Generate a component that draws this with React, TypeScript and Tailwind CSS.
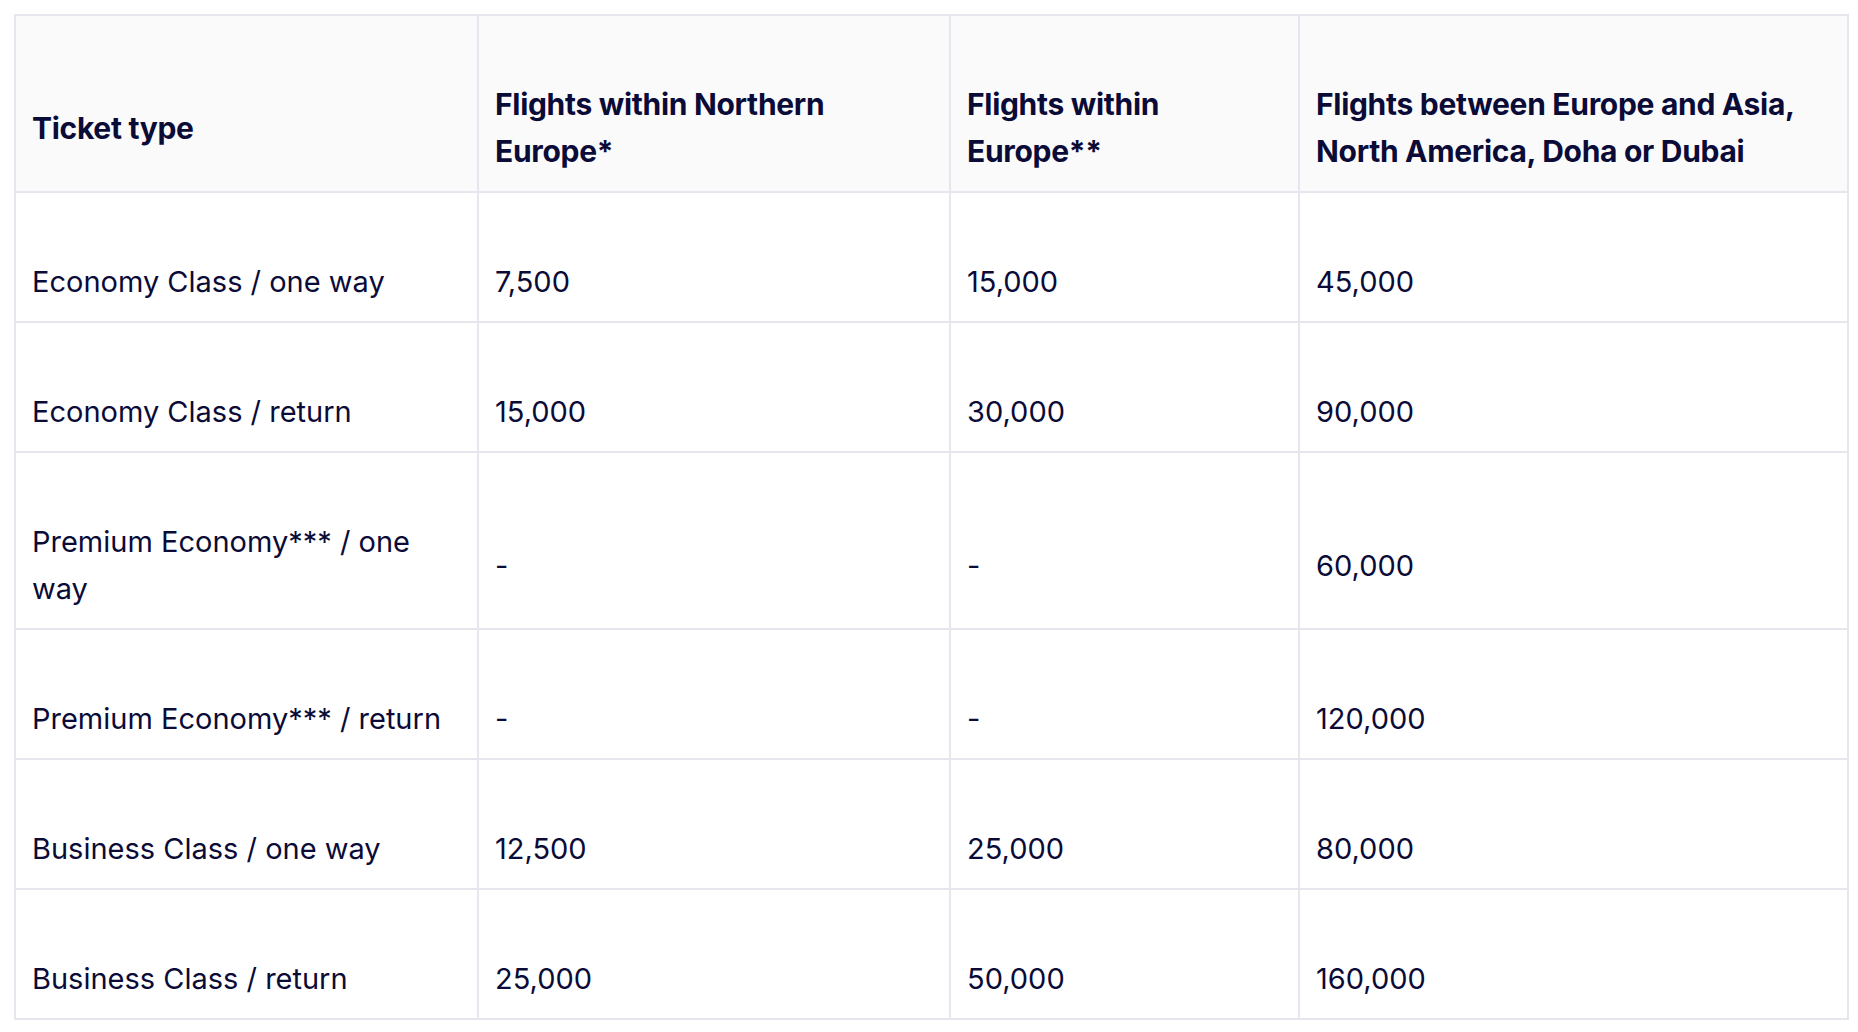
const HEADERS = [
  'Ticket type',
  'Flights within Northern Europe*',
  'Flights within Europe**',
  'Flights between Europe and Asia, North America, Doha or Dubai',
];

const ROWS: string[][] = [
  ['Economy Class / one way', '7,500', '15,000', '45,000'],
  ['Economy Class / return', '15,000', '30,000', '90,000'],
  ['Premium Economy*** / one way', '-', '-', '60,000'],
  ['Premium Economy*** / return', '-', '-', '120,000'],
  ['Business Class / one way', '12,500', '25,000', '80,000'],
  ['Business Class / return', '25,000', '50,000', '160,000'],
];

const cell = 'border-2 border-[#e6e6ef] pl-[16px] pr-[16px] pt-[65px] pb-[16px] text-left align-middle';

export default function App() {
  return (
    <div className="min-h-screen bg-white pl-[14px] pt-[14px] font-['Inter',sans-serif] text-[#0b0b38]">
      <table className="w-[1833px] table-fixed border-collapse leading-[47px]">
        <colgroup>
          <col className="w-[463px]" />
          <col className="w-[472px]" />
          <col className="w-[349px]" />
          <col className="w-[549px]" />
        </colgroup>
        <thead>
          <tr className="bg-[#fafafb]">
            {HEADERS.map((h) => (
              <th key={h} className={`${cell} text-[30px] font-bold tracking-[-0.01em]`}>
                {h}
              </th>
            ))}
          </tr>
        </thead>
        <tbody>
          {ROWS.map((row) => (
            <tr key={row[0]}>
              {row.map((v, i) => (
                <td key={i} className={`${cell} text-[29px] font-normal`}>
                  {v}
                </td>
              ))}
            </tr>
          ))}
        </tbody>
      </table>
    </div>
  );
}
